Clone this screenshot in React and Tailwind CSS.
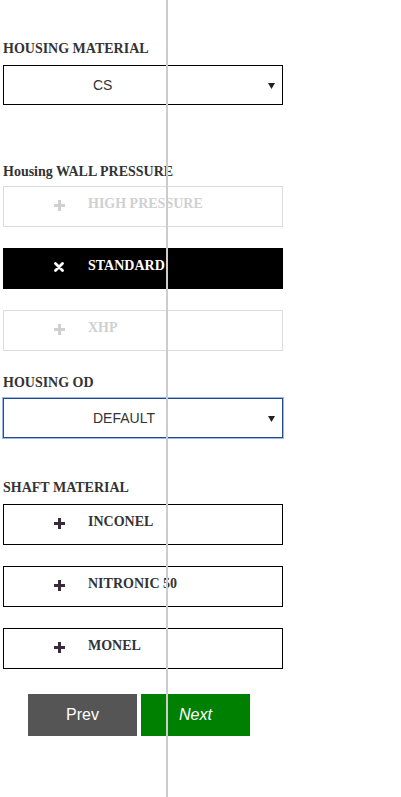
import React from 'react';

const WALL = [
  { id: 'hp', label: 'HIGH PRESSURE', state: 'disabled' },
  { id: 'std', label: 'STANDARD', state: 'selected' },
  { id: 'xhp', label: 'XHP', state: 'disabled' },
];

const SHAFT = [
  { id: 'inc', label: 'INCONEL', state: 'normal' },
  { id: 'nit', label: 'NITRONIC 50', state: 'normal' },
  { id: 'mon', label: 'MONEL', state: 'normal' },
];

function PlusIcon({ color }) {
  return (
    <svg width="11" height="11" viewBox="0 0 11 11" className="block mt-[4px]">
      <rect x="4" y="0" width="3" height="11" fill={color} />
      <rect x="0" y="4" width="11" height="3" fill={color} />
    </svg>
  );
}

function CrossIcon() {
  return (
    <svg width="10" height="10" viewBox="0 0 10 10" className="block mt-[4px]">
      <path d="M1.5 1.5 L8.5 8.5 M8.5 1.5 L1.5 8.5" stroke="#fff" strokeWidth="2.8" strokeLinecap="round" />
    </svg>
  );
}

function Label({ children, className = '' }) {
  return (
    <div className={`font-['Liberation_Serif',serif] font-bold text-[14px] leading-[16px] text-[#333] ${className}`}>
      {children}
    </div>
  );
}

function Select({ value, focused }) {
  return (
    <div
      className={`relative h-[40px] w-[280px] flex items-center pl-[89px] font-['Liberation_Sans',Arial,sans-serif] text-[14px] text-[#333] bg-white border ${
        focused ? 'border-[#234a8c] shadow-[0_0_0_1px_#9bb8ea]' : 'border-black'
      }`}
    >
      <span>{value}</span>
      <svg width="7" height="6" viewBox="0 0 7 6" className="absolute right-[7px] top-[17px]">
        <polygon points="0,0 7,0 3.5,6" fill="#222" />
      </svg>
    </div>
  );
}

function OptionBox({ item }) {
  const selected = item.state === 'selected';
  const disabled = item.state === 'disabled';
  const box = selected
    ? 'bg-black border-black text-white'
    : disabled
    ? 'bg-white border-[#dcdcdc] text-[#d0d0d0]'
    : 'bg-white border-black text-[#333]';
  return (
    <div className={`h-[41px] w-[280px] border flex items-start pt-[9px] pl-[49px] ${box}`}>
      <span className="w-[12px] flex justify-center">
        {selected ? <CrossIcon /> : <PlusIcon color={disabled ? '#d0d0d0' : '#3b2a3c'} />}
      </span>
      <span className="ml-[23px] font-['Liberation_Serif',serif] font-bold text-[14px] leading-[16px] whitespace-nowrap">
        {item.label}
      </span>
    </div>
  );
}

export default function App() {
  return (
    <div className="relative min-h-[797px] bg-white">
      <div className="pl-[3px] pt-[41px]">
        <Label className="mb-[8px]">HOUSING MATERIAL</Label>
        <Select value="CS" />

        <Label className="mt-[59px] mb-[6px]">Housing WALL PRESSURE</Label>
        <div className="flex flex-col gap-[21px]">
          {WALL.map((w) => (
            <OptionBox key={w.id} item={w} />
          ))}
        </div>

        <Label className="mt-[24px] mb-[7px]">HOUSING OD</Label>
        <Select value="DEFAULT" focused />

        <Label className="mt-[42px] mb-[8px]">SHAFT MATERIAL</Label>
        <div className="flex flex-col gap-[21px]">
          {SHAFT.map((s) => (
            <OptionBox key={s.id} item={s} />
          ))}
        </div>

        <div className="mt-[25px] ml-[25px] flex gap-[4px] font-['Liberation_Sans',Arial,sans-serif] text-[16px] text-white">
          <button type="button" className="h-[42px] w-[109px] bg-[#555555]">
            Prev
          </button>
          <button type="button" className="h-[42px] w-[109px] bg-[#008000] italic">
            Next
          </button>
        </div>
      </div>

      {/* guide line over the page */}
      <div className="absolute left-[166px] top-0 w-[2px] h-[797px] bg-[#cccccc] pointer-events-none" />
    </div>
  );
}
